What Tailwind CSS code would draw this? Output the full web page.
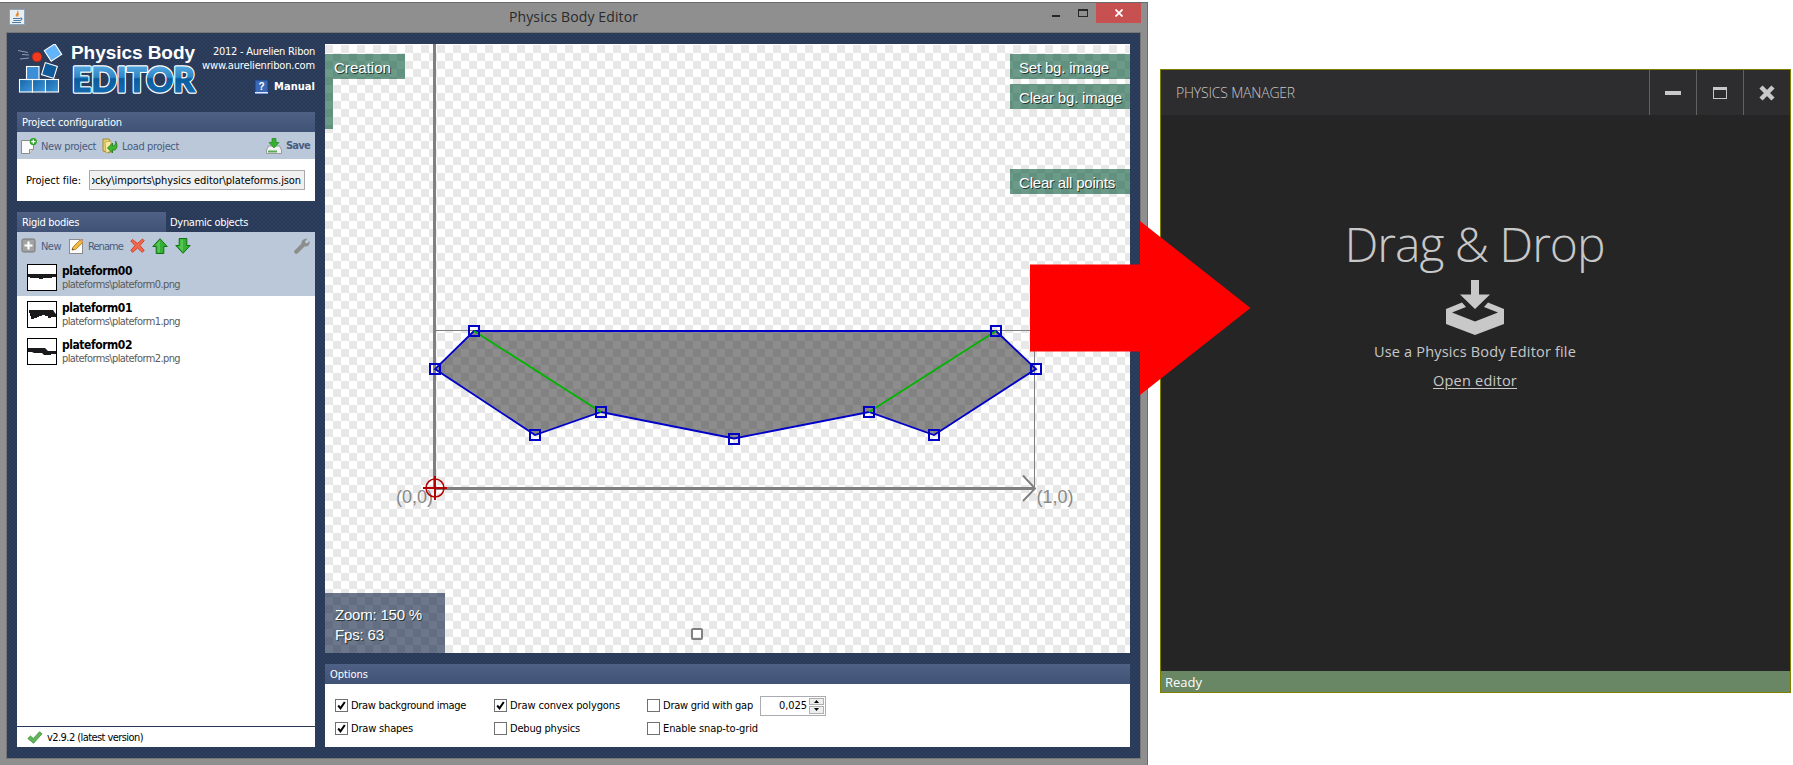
<!DOCTYPE html>
<html lang="en">
<head>
<meta charset="utf-8">
<title>Physics Body Editor</title>
<script src="https://cdn.jsdelivr.net/npm/@tailwindcss/browser@4"></script>
</head>
<body class="relative h-[765px] w-[1793px] overflow-hidden bg-white font-['DejaVu_Sans_Condensed','DejaVu_Sans',sans-serif] text-[11px] leading-[14px] whitespace-nowrap text-black">
<div class="flex items-start">

  <!-- Editor window -->
  <section class="mt-[2px] flex h-[763px] w-[1148px] flex-col border-t border-r border-[#6b6b6b] bg-[#8f8f8f]">
    <header class="flex h-[29px] items-start">
      <svg class="mt-[6px] ml-[9px] h-4 w-4" viewBox="0 0 16 16"><rect x=".5" y=".5" width="15" height="15" fill="#e9eef3" stroke="#8da3b8"/><path d="M8.5 2c2 2-2.500 3-1 5.500M10 4.500c-2 1.200-1.500 2-1 3" fill="none" stroke="#e8862e" stroke-width="1.200"/><path d="M4 9.500h7M4.500 11.500h6M3 13.500h9M11 9c3 0 2 2-.5 2.500" fill="none" stroke="#4a7ba6" stroke-width="1.100"/></svg>
      <div class="mt-[4px] ml-[484px] font-['Open_Sans',sans-serif] text-[14px] leading-[20px] text-[#2a2a2a]"><span class="inline-block" data-w="129">Physics Body Editor</span></div>
      <div class="mt-[12px] ml-auto h-[2px] w-2 bg-[#262626]"></div>
      <div class="mt-[6px] ml-[18px] h-[8px] w-[10px] border border-t-2 border-[#262626]"></div>
      <div class="mr-[6px] ml-[8px] flex h-[20px] w-[45px] items-center justify-center bg-[#c75050]">
        <svg class="h-2 w-2" viewBox="0 0 8 8"><path d="M.5 .5l7 7M7.500 .5l-7 7" stroke="#fff" stroke-width="1.800"/></svg>
      </div>
    </header>

    <main class="ml-[6px] flex h-[727px] w-[1135px] gap-[10px] border border-[#767676] bg-[#293955] bg-[radial-gradient(circle_at_1px_1px,#33456a_0.5px,transparent_0.9px),radial-gradient(circle_at_3px_3px,#33456a_0.5px,transparent_0.9px)] bg-[size:4px_4px] pt-[11px] pl-[10px]">
      <!-- Left column -->
      <div class="flex w-[298px] flex-col">
        <div class="flex h-[68px] justify-between">
          <svg class="h-[54px] w-[182px]" viewBox="17 44 182 54">
            <defs>
              <linearGradient id="ed" x1="0" y1="0" x2="0" y2="1"><stop offset="0" stop-color="#6fc0f0"/><stop offset=".48" stop-color="#2f86c6"/><stop offset=".52" stop-color="#0a5c9e"/><stop offset="1" stop-color="#1a72b8"/></linearGradient>
              <linearGradient id="bx" x1="0" y1="0" x2="1" y2="1"><stop offset="0" stop-color="#1565a8"/><stop offset="1" stop-color="#3f97dc"/></linearGradient>
            </defs>
            <g stroke="#fff" stroke-width="1.100">
              <rect x="19.500" y="79.500" width="13" height="12.500" fill="url(#bx)"/><rect x="32.500" y="79.500" width="13" height="12.500" fill="url(#bx)"/><rect x="45.500" y="79.500" width="13" height="12.500" fill="url(#bx)"/>
              <rect x="26.500" y="66.500" width="12.500" height="13" fill="#3b8fd6"/>
              <rect x="-6.300" y="-6.300" width="12.600" height="12.600" transform="translate(49.500 70.500) rotate(17)" fill="#0f5b9c"/>
              <rect x="-6.300" y="-6.300" width="12.600" height="12.600" transform="translate(53 52.500) rotate(-33)" fill="#63b4fa"/>
            </g>
            <circle cx="37" cy="57" r="4.800" fill="#f23a1e" stroke="#b81f10" stroke-width=".6"/>
            <path d="M18 50.500l10 2M22 54.500l7 .5M20 59l9-1" stroke="#8d9bb3" stroke-width="1" fill="none"/>
            <text x="71" y="58.500" fill="#fff" font-family="Liberation Sans" font-weight="700" font-size="19" textLength="124">Physics Body</text>
            <text x="72" y="92" fill="url(#ed)" stroke="#fff" stroke-width="3.500" paint-order="stroke" stroke-linejoin="round" font-family="Lato" font-weight="900" font-size="35" textLength="123" lengthAdjust="spacingAndGlyphs">EDITOR</text>
            <text x="72" y="92" fill="url(#ed)" stroke="url(#ed)" stroke-width="1" aria-hidden="true" font-family="Lato" font-weight="900" font-size="35" textLength="123" lengthAdjust="spacingAndGlyphs">EDITOR</text>
          </svg>
          <div class="flex flex-col items-end text-white">
            <span class="mt-px" data-w="102">2012 - Aurelien Ribon</span>
            <span data-w="113">www.aurelienribon.com</span>
            <div class="mt-[6px] flex items-center gap-[5px] font-bold">
              <svg class="h-4 w-[15px]" viewBox="0 0 15 16"><path d="M1 1h13v14H1z" fill="#3b68b5" stroke="#1d3f80"/><path d="M1 13h13v1.500H1z" fill="#dfe8f8"/><text x="7.500" y="10.500" text-anchor="middle" font-size="10" font-weight="700" fill="#fff" font-family="Liberation Sans">?</text></svg>
              <span data-w="41">Manual</span>
            </div>
          </div>
        </div>

        <div class="flex h-5 items-center bg-linear-to-b from-[#4f6285] to-[#405376] pt-px pl-[5px] text-white"><span data-w="100">Project configuration</span></div>
        <div class="flex h-[27px] items-center bg-[#bbc8d9] pl-1 text-[#485c80]">
          <svg class="h-4 w-4" viewBox="0 0 16 16"><path d="M.5 2.500h12v9l-4 4h-8z" fill="#fbfbfb" stroke="#8c8c8c"/><path d="M12.500 11.500h-4v4" fill="#ddd" stroke="#8c8c8c"/><circle cx="12.300" cy="3.600" r="3.600" fill="#2ea32a"/><path d="M12.300 1.400v4.400M10.100 3.600h4.400" stroke="#fff" stroke-width="1.300"/></svg>
          <span class="ml-1 pt-[3px]" data-w="55">New project</span>
          <svg class="ml-[6px] h-4 w-4" viewBox="0 0 16 16"><path d="M1 1h6l1 2v12l-7-2z" fill="#e8cf6b" stroke="#a08a35"/><path d="M3 4l6-1v10l-5 2z" fill="#f8e9a4" stroke="#b59c45" stroke-width=".7"/><path d="M5.500 10l5-5v3c3 0 3.500-3 3-5 2.500 4 2 10-3 9v3z" fill="#3fb52f" stroke="#1d7a18" stroke-width=".8"/></svg>
          <span class="ml-1 pt-[3px]" data-w="57">Load project</span>
          <svg class="ml-auto h-4 w-4" viewBox="0 0 16 16"><path d="M2.500 8h11l2 4v3.500H.5V12z" fill="#f1f1f1" stroke="#8a8a8a" stroke-width=".8"/><path d="M2 12.500h9v2H2z" fill="#5aa858"/><path d="M6 .5h4v4h3l-5 5.500-5-5.500h3z" fill="#37b12d" stroke="#1d8a1a" stroke-width=".7"/></svg>
          <span class="mr-[5px] ml-1 pt-px font-bold" data-w="24">Save</span>
        </div>
        <div class="flex h-[42px] items-center bg-white pl-[9px]">
          <span class="pt-px" data-w="55">Project file:</span>
          <div class="ml-[8px] flex h-5 w-[216px] items-center justify-end border border-[#a9a9ad] bg-[#f0f0f0] pr-[3px] pl-[2px]"><div class="flex w-[209px] justify-end overflow-hidden pt-px"><span data-w="212">ocky\imports\physics editor\plateforms.json</span></div></div>
        </div>

        <div class="mt-[11px] flex h-5 text-white">
          <div class="flex w-[149px] items-center bg-linear-to-b from-[#4f6285] to-[#405376] pt-px pl-[5px]"><span data-w="57">Rigid bodies</span></div>
          <div class="flex items-center pt-px pl-[4px]"><span data-w="78">Dynamic objects</span></div>
        </div>
        <div class="flex flex-1 flex-col bg-white">
          <div class="flex h-[27px] items-center bg-[#bbc8d9] pl-1 text-[#485c80]">
            <svg class="h-[15px] w-[15px]" viewBox="0 0 15 15"><rect x="1" y="1" width="13" height="13" rx="1.500" fill="#a2a2a2" stroke="#777"/><path d="M7.500 3.500v8M3.500 7.500h8" stroke="#fff" stroke-width="2.200"/></svg>
            <span class="ml-[5px] pt-[3px]" data-w="20">New</span>
            <svg class="ml-[8px] h-4 w-[15px]" viewBox="0 0 15 16"><rect x=".5" y="1.500" width="13" height="14" fill="#fcfcfc" stroke="#8c8c8c"/><path d="M3 12l1-3 7-7 2.800 2.500-7.300 7z" fill="#f2b93d" stroke="#a8701c" stroke-width=".8"/><path d="M11 2l1-1 2.500 2.500-1 1z" fill="#e39a7d"/><path d="M3 12l.5-1.500 1.200 1z" fill="#333"/></svg>
            <span class="ml-1 pt-[3px]" data-w="35">Rename</span>
            <svg class="ml-[7px] h-[15px] w-[15px]" viewBox="0 0 15 15"><path d="M2.500 1.500L7.500 5.500 12.500 1 14.200 2.700 10 7.500 14.200 12.500 12.200 14.300 7.500 10 2.700 14.300.8 12.500 5 7.500.8 3z" fill="#f4694d" stroke="#c93a22" stroke-width=".9"/></svg>
            <svg class="ml-[7px] h-4 w-4" viewBox="0 0 16 16"><path d="M8 .7l7.200 7.800h-3.400v7H4.200v-7H.8z" fill="#35b034" stroke="#0d7410"/><path d="M8 2.500v12H5.500v-7H3.300z" fill="#67cd62" opacity=".7"/></svg>
            <svg class="ml-[7px] h-4 w-4" viewBox="0 0 16 16"><path d="M8 15.300L.8 7.500h3.400v-7h7.600v7h3.400z" fill="#35b034" stroke="#0d7410"/><path d="M8 13.500v-12H5.500v7H3.300z" fill="#67cd62" opacity=".7"/></svg>
            <svg class="mr-[5px] ml-auto h-4 w-4" viewBox="0 0 16 16"><path d="M2.300 13.700L9 7" stroke="#8d8d8d" stroke-width="4.200" stroke-linecap="round"/><path d="M13.500 .8l-2.600 2.700.6 1.500 1.600.4 2.400-2.500c1 3-1.500 6.300-4.500 5.600L7.500 5.500C7 2.500 10 0 13.500 .8z" fill="#8d8d8d"/></svg>
          </div>
          <div class="flex h-[37px] bg-[#bbc8d9] pt-[5px] pl-[10px]">
            <svg class="h-[27px] w-[30px] border border-black bg-white" viewBox="0 0 28 25"><path d="M0 9h28v3h-4v1h-9v1h-4v-1H2v-1H0z" fill="#1a1a1c"/></svg>
            <div class="ml-[5px] flex flex-col items-start"><span class="text-[12px] font-bold" data-w="70">plateform00</span><span class="text-[#5a5a5a]" data-w="118">plateforms\plateform0.png</span></div>
          </div>
          <div class="flex h-[37px] pt-[5px] pl-[10px]">
            <svg class="h-[27px] w-[30px] border border-black bg-white" viewBox="0 0 28 25"><path d="M1 8h24l2 3 1 1v3h-5v1h-3v-2h-3v-1h-3v1h-3v1H9v1H6v1H3v-3H2v-3H1z" fill="#1a1a1c"/></svg>
            <div class="ml-[5px] flex flex-col items-start"><span class="text-[12px] font-bold" data-w="70">plateform01</span><span class="text-[#5a5a5a]" data-w="118">plateforms\plateform1.png</span></div>
          </div>
          <div class="flex h-[37px] pt-[5px] pl-[10px]">
            <svg class="h-[27px] w-[30px] border border-black bg-white" viewBox="0 0 28 25"><path d="M0 9h17l3 3h8v3h-5v1h-7l-2-2H6l-2-1H0z" fill="#1a1a1c"/></svg>
            <div class="ml-[5px] flex flex-col items-start"><span class="text-[12px] font-bold" data-w="70">plateform02</span><span class="text-[#5a5a5a]" data-w="118">plateforms\plateform2.png</span></div>
          </div>
          <div class="mt-auto flex h-[21px] items-center border-t border-[#2a3b5a] pl-[10px]">
            <svg class="h-[13px] w-[16px]" viewBox="0 0 16 13"><path d="M.8 7.500L3.500 5 6.300 7.500 12.500 .8 15 2.800 6.500 12.300z" fill="#5fb558" stroke="#3f8f3c" stroke-width=".8"/></svg>
            <span class="ml-[4px] pt-px" data-w="96">v2.9.2 (latest version)</span>
          </div>
          <div class="h-[11px] bg-[#293955] bg-[radial-gradient(circle_at_1px_1px,#33456a_0.5px,transparent_0.9px),radial-gradient(circle_at_3px_3px,#33456a_0.5px,transparent_0.9px)] bg-[size:4px_4px]"></div>
        </div>
      </div>

      <!-- Canvas and options -->
      <div class="flex w-[805px] flex-col">
        <div class="relative h-[609px] bg-white">
          <svg class="absolute inset-0 h-[609px] w-[805px]" viewBox="325 44 805 609">
            <defs><pattern id="checker" x="325" y="45" width="16" height="16" patternUnits="userSpaceOnUse"><path d="M0 0h8v8H0zM8 8h8v8H8z" fill="#e8e8e8" shape-rendering="crispEdges"/></pattern></defs>
            <rect x="325" y="45" width="805" height="608" fill="url(#checker)"/>
            <path d="M434.500 44V489M434 488.500h600" stroke="#808080" stroke-width="3" fill="none"/>
            <path d="M436 330.500h598.500V488" stroke="#808080" fill="none"/>
            <path d="M1023 475.500l12 13-12 12.500" stroke="#808080" stroke-width="2" fill="none"/>
            <path d="M474 331L996 331 1036 369 934 435 869 412 734 438.500 601 412 535 435 435 369z" fill="#191c19" fill-opacity=".5" stroke="#0000c8" stroke-width="1.800"/>
            <path d="M474 331L601 412M996 331L869 412" stroke="#00b400" stroke-width="1.800"/>
            <g fill="none" stroke="#0000c8" stroke-width="2">
              <rect x="469" y="326" width="10" height="10"/><rect x="991" y="326" width="10" height="10"/><rect x="1031" y="364" width="10" height="10"/><rect x="929" y="430" width="10" height="10"/><rect x="864" y="407" width="10" height="10"/><rect x="729" y="434" width="10" height="10"/><rect x="596" y="407" width="10" height="10"/><rect x="530" y="430" width="10" height="10"/><rect x="430" y="364" width="10" height="10"/>
            </g>
            <rect x="692" y="629" width="10" height="10" rx="1" fill="none" stroke="#808080" stroke-width="2"/>
            <g fill="#888" font-family="Liberation Sans" font-size="18"><text x="396" y="503">(0,0)</text><text x="1036.500" y="503">(1,0)</text></g>
            <g stroke="#b40000" fill="none"><circle cx="435" cy="488" r="9" stroke-width="1.500"/><path d="M423 488h24M435 476v24" stroke-width="2"/></g>
          </svg>
          <div class="absolute inset-0 flex justify-between font-['Liberation_Sans',sans-serif] text-[15px] leading-[18px] text-white [text-shadow:1px_1px_0_#26382f]">
            <div class="flex flex-col">
              <div class="mt-[10px] flex h-[25px] w-20 items-center bg-[#08573a]/60 pt-[3px] pl-[9px]"><span data-w="57">Creation</span></div>
              <div class="h-[50px] w-2 bg-[#08573a]/60"></div>
              <div class="mt-auto h-[60px] w-[120px] bg-[#0a1c3f]/60 pt-[12px] pl-[10px] leading-[20px]"><div><span class="inline-block" data-w="87">Zoom: 150 %</span></div><div><span class="inline-block" data-w="49">Fps: 63</span></div></div>
            </div>
            <div class="flex w-[120px] flex-col pt-[10px]">
              <div class="flex h-[25px] items-center bg-[#08573a]/60 pt-[3px] pl-[9px]"><span data-w="90">Set bg. image</span></div>
              <div class="mt-[5px] flex h-[25px] items-center bg-[#08573a]/60 pt-[3px] pl-[9px]"><span data-w="103">Clear bg. image</span></div>
              <div class="mt-[60px] flex h-[25px] items-center bg-[#08573a]/60 pt-[3px] pl-[9px]"><span data-w="96">Clear all points</span></div>
            </div>
          </div>
        </div>

        <div class="mt-[11px] flex h-5 items-center bg-linear-to-b from-[#4f6285] to-[#405376] pt-px pl-[5px] text-white"><span data-w="38">Options</span></div>
        <div class="grid h-[63px] grid-cols-[159px_153px_1fr] grid-rows-[23px_23px] bg-white pt-[10px] pl-[10px]">
          <div class="flex items-center gap-[3px]"><svg class="h-[13px] w-[13px]" viewBox="0 0 13 13"><rect x=".5" y=".5" width="12" height="12" fill="#fff" stroke="#707070"/><path d="M3.200 6.500l2.300 2.800L9.800 3" fill="none" stroke="#000" stroke-width="2"/></svg><span data-w="115">Draw background image</span></div>
          <div class="flex items-center gap-[3px]"><svg class="h-[13px] w-[13px]" viewBox="0 0 13 13"><rect x=".5" y=".5" width="12" height="12" fill="#fff" stroke="#707070"/><path d="M3.200 6.500l2.300 2.800L9.800 3" fill="none" stroke="#000" stroke-width="2"/></svg><span data-w="110">Draw convex polygons</span></div>
          <div class="flex items-center gap-[3px]"><div class="h-[13px] w-[13px] border border-[#707070]"></div><span data-w="90">Draw grid with gap</span>
            <div class="ml-[4px] flex h-5 w-[66px] items-center justify-end border border-[#ababb2] bg-white pr-px"><span data-w="28">0,025</span>
              <div class="ml-[2px] flex h-4 w-[15px] flex-col gap-px"><div class="flex flex-1 items-center justify-center border border-[#b0b0b0] bg-[#eee]"><svg class="h-[3px] w-[5px]" viewBox="0 0 5 3"><path d="M0 3h5L2.500 0z"/></svg></div><div class="flex flex-1 items-center justify-center border border-[#b0b0b0] bg-[#eee]"><svg class="h-[3px] w-[5px]" viewBox="0 0 5 3"><path d="M0 0h5L2.500 3z"/></svg></div></div>
            </div>
          </div>
          <div class="flex items-center gap-[3px]"><svg class="h-[13px] w-[13px]" viewBox="0 0 13 13"><rect x=".5" y=".5" width="12" height="12" fill="#fff" stroke="#707070"/><path d="M3.200 6.500l2.300 2.800L9.800 3" fill="none" stroke="#000" stroke-width="2"/></svg><span data-w="62">Draw shapes</span></div>
          <div class="flex items-center gap-[3px]"><div class="h-[13px] w-[13px] border border-[#707070]"></div><span data-w="70">Debug physics</span></div>
          <div class="flex items-center gap-[3px]"><div class="h-[13px] w-[13px] border border-[#707070]"></div><span data-w="95">Enable snap-to-grid</span></div>
        </div>
      </div>
    </main>
  </section>

  <!-- Manager window -->
  <section class="mt-[69px] ml-[12px] flex h-[624px] w-[631px] flex-col border border-[#808000] bg-[#252526] font-['Open_Sans',sans-serif] text-[#c8c8c8]">
    <header class="flex h-[45px] items-center bg-[#2d2d30] pl-[15px]">
      <span class="text-[14px] leading-[20px] font-light" data-w="119">PHYSICS MANAGER</span>
      <div class="ml-auto flex h-full">
        <div class="flex w-[47px] items-center justify-center border-l border-[#606060]"><div class="h-1 w-4 bg-[#c8c8c8]"></div></div>
        <div class="flex w-[47px] items-center justify-center border-l border-[#606060]"><div class="h-[12px] w-[14px] border border-t-[3px] border-[#c8c8c8]"></div></div>
        <div class="flex w-[47px] items-center justify-center border-l border-[#606060]"><svg class="h-4 w-4" viewBox="0 0 16 16"><path d="M2 2l12 12M14 2L2 14" stroke="#c8c8c8" stroke-width="4.500"/></svg></div>
      </div>
    </header>
    <div class="flex flex-1 flex-col items-center">
      <span class="mt-[97px] mr-[2px] text-[48px] leading-[64px] font-light" data-w="260">Drag &amp; Drop</span>
      <svg class="mt-[4px] mr-[2px] h-[55px] w-[58px]" viewBox="0 0 58 55"><path d="M25 0h8v14.500h11L29 29 14 14.500h11z" fill="#c8c8c8"/><path d="M16 22.500L0 29v15l29 11 29-11V29l-16-6.500-4 4.500 14 5.500L29 41.500 6 32.500 20 27z" fill="#c8c8c8"/></svg>
      <span class="mt-[7px] mr-px text-[14.500px] leading-[20px]" data-w="202">Use a Physics Body Editor file</span>
      <span class="mt-[9px] mr-px text-[14.500px] leading-[20px] underline underline-offset-2" data-w="84">Open editor</span>
    </div>
    <footer class="flex h-[21px] items-center bg-[#6a8765] pl-1 text-[13px] leading-[18px] text-white"><span data-w="37">Ready</span></footer>
  </section>
</div>

<!-- Drag direction arrow between the windows -->
<svg class="absolute top-[221px] left-[1030px] h-[174px] w-[221px]" viewBox="0 0 221 174"><path d="M0 43.500h110V0l110.500 87L110 174v-43.500H0z" fill="#f00"/></svg>

<script>
// Fit each label to its designed width in pixels once styles and fonts are in force.
function fitLabels() {
  const labels = [...document.querySelectorAll('[data-w]')];
  labels.forEach(el => { el.style.letterSpacing = '0px'; });
  const widths = labels.map(el => el.getBoundingClientRect().width);
  labels.forEach((el, i) => {
    el.style.letterSpacing = ((el.dataset.w - widths[i]) / el.textContent.length).toFixed(3) + 'px';
  });
}
addEventListener('load', () => {
  fitLabels();
  document.fonts.ready.then(fitLabels);
  setTimeout(fitLabels, 60);
  setTimeout(fitLabels, 250);
});
</script>
</body>
</html>
